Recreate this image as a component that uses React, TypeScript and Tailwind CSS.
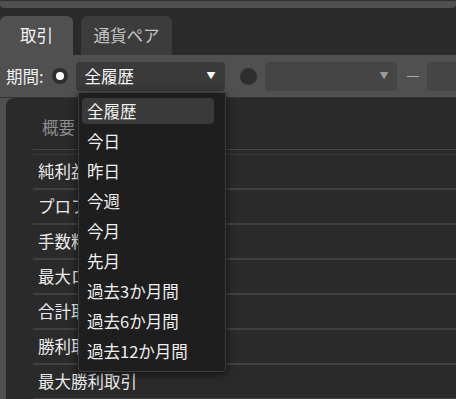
import React from "react";

const font = { fontFamily: '"Noto Sans CJK JP", "Noto Sans", sans-serif' };

const rows = ["純利益", "プロフィットファクター", "手数料", "最大ロス取引", "合計取引数", "勝利取引数", "最大勝利取引"];
const items = ["全履歴", "今日", "昨日", "今週", "今月", "先月", "過去3か月間", "過去6か月間", "過去12か月間"];

export default function App() {
  return (
    <div className="relative w-[456px] h-[399px] overflow-hidden bg-[#505050] flex flex-col text-[16.5px]" style={font}>
      {/* top strip */}
      <div className="h-[8px] bg-[#2a2a2a] shrink-0">
        <div className="h-[8px] border-t border-[#303030] bg-[#505050] rounded-b-[4px]" />
      </div>
      {/* tabs */}
      <div className="h-[47px] bg-[#2a2a2a] flex items-end gap-[8px] shrink-0">
        <div className="w-[73px] h-[39px] shrink-0 bg-[#505050] rounded-t-[6px] flex items-center justify-center text-[#f2f2f2]">取引</div>
        <div className="w-[91px] h-[39px] shrink-0 bg-[#3c3c3c] rounded-t-[6px] flex items-center justify-center text-[#c4c4c4]">通貨ペア</div>
      </div>
      {/* toolbar */}
      <div className="h-[43px] flex items-center shrink-0 border-b border-[#333] whitespace-nowrap">
        <span className="ml-[6px] shrink-0 text-[#f0f0f0]">期間:</span>
        <div className="ml-[8px] shrink-0 w-[16px] h-[16px] rounded-full bg-[#2e2e2e] flex items-center justify-center">
          <div className="w-[8px] h-[8px] rounded-full bg-white" />
        </div>
        <div className="ml-[8px] shrink-0 w-[149px] h-[29px] rounded-[4px] bg-[#3a3a3a] flex items-center justify-between pl-[9px] pr-[9px] text-[#f5f5f5]">
          <span>全履歴</span>
          <span className="text-[9px] text-white">▼</span>
        </div>
        <div className="ml-[15px] shrink-0 w-[17px] h-[17px] rounded-full bg-[#2e2e2e]" />
        <div className="ml-[8px] shrink-0 w-[132px] h-[29px] rounded-[4px] bg-[#454545] flex items-center justify-end pr-[8px]">
          <span className="text-[9px] text-[#9a9a9a]">▼</span>
        </div>
        <div className="ml-[10px] shrink-0 w-[12px] h-[1px] bg-[#aaaaaa]" />
        <div className="ml-[8px] w-[60px] h-[29px] rounded-[4px] bg-[#454545] shrink-0" />
      </div>
      {/* main */}
      <div className="flex-1 pl-[6px] flex">
        <div className="flex-1 bg-[#2a2a2a] rounded-tl-[8px] pl-[27px]">
          <div className="h-[52px] border-b border-[#454545] flex items-center pl-[9px] pt-[8px] text-[#8a8a8a]">概要</div>
          <div className="h-[5px] border-b border-[#383838]" />
          {rows.map((r) => (
            <div key={r} className="h-[35px] border-b-2 border-[#404040] flex items-center pl-[5px] text-[#ececec] whitespace-nowrap">
              {r}
            </div>
          ))}
        </div>
      </div>
      {/* dropdown */}
      <div className="absolute left-[78px] top-[92px] w-[148px] h-[280px] bg-[#1e1e1e] border border-[#3c3c3c] rounded-b-[4px] shadow-[0_2px_8px_rgba(0,0,0,0.6)] pt-[5px] pl-[3px] flex flex-col gap-[4px]">
        {items.map((it, i) => (
          <div
            key={it}
            className={
              "w-[132px] h-[26px] rounded-[4px] flex items-center pl-[5px] text-[#f0f0f0] " +
              (i === 0 ? "bg-[#3a3a3a]" : "")
            }
          >
            {it}
          </div>
        ))}
      </div>
    </div>
  );
}
